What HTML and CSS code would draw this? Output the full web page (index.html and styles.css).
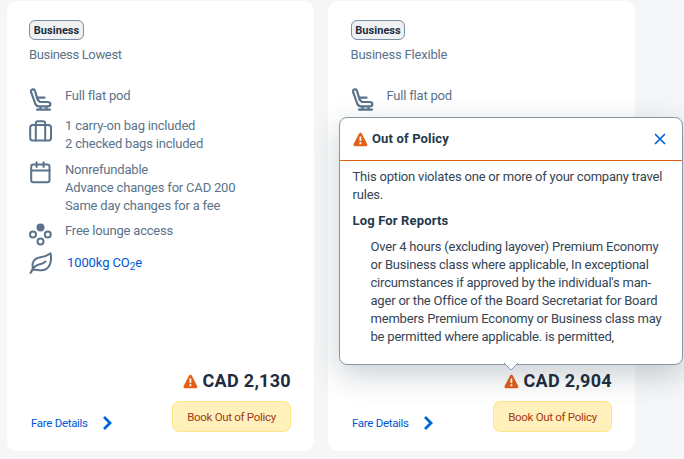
FILE: index.html
```html
<!DOCTYPE html>
<html lang="en">
<head>
    <meta charset="UTF-8">
    <title>Fares</title>
    <link rel="stylesheet" href="styles.css">
</head>
<body>
<svg class="defs" width="0" height="0">
    <symbol id="i-seat" viewBox="0 0 23 23">
        <path d="M2 3.8C1.6 1 5.4 .4 6 2.8L8.6 11.6L11 14H18.5C22.3 14 22.3 18.4 18.5 18.4H10C8 18.4 7.1 17.5 6.4 16Z M9.4 9.6H15.5 M11.5 18.5V21 M17.5 18.5V21 M8 21.6H21"/>
    </symbol>
    <symbol id="i-bag" viewBox="0 0 23 23">
        <rect x="1.2" y="5" width="20.8" height="15.5" rx="2.5"/>
        <path d="M6.8 5V20.5 M16.2 5V20.5 M6.8 5V3.5Q6.8 1.2 9 1.2H14Q16.2 1.2 16.2 3.5V5"/>
    </symbol>
    <symbol id="i-cal" viewBox="0 0 23 23">
        <rect x="2.2" y="3.5" width="18.3" height="17.7" rx="2"/>
        <path d="M2 9.5H20.5 M7.6 1.3V6 M14.6 1.3V6"/>
    </symbol>
    <symbol id="i-lounge" viewBox="0 0 23 23">
        <circle class="solid" cx="11.5" cy="4.5" r="4"/>
        <circle cx="4" cy="11.5" r="3"/>
        <circle cx="18.8" cy="11.5" r="3"/>
        <circle cx="11.5" cy="18.5" r="3"/>
    </symbol>
    <symbol id="i-leaf" viewBox="0 0 23 23">
        <path d="M4 16.5C2.5 11 4.5 6.5 11.5 5.3C16 4.7 18.5 3.5 21.5 1.4C23 8 21.5 17.5 13 18.3C10 18.5 7.5 17.5 4 17.5C2.5 18 3.3 20 1.5 21 M1.5 21C3.5 15.5 6 13.5 10 12.5C12.5 12 14.5 11.3 16.5 9.5"/>
    </symbol>
    <symbol id="i-warn" viewBox="0 0 15 15">
        <path class="tri" d="M7.4 2.2L12.8 12.8H2Z"/>
        <path class="mark" d="M7.4 4.6V9 M7.4 10.3V12.2"/>
    </symbol>
</svg>

<div class="fares">
    <div class="card">
        <span class="tag">Business</span>
        <div class="name">Business Lowest</div>
        <ul class="features">
            <li class="seat"><svg><use href="#i-seat"/></svg><p>Full flat pod</p></li>
            <li class="bags"><svg><use href="#i-bag"/></svg><p>1 carry-on bag included<br>2 checked bags included</p></li>
            <li class="rules"><svg><use href="#i-cal"/></svg><p>Nonrefundable<br>Advance changes for CAD 200<br>Same day changes for a fee</p></li>
            <li class="lounge"><svg><use href="#i-lounge"/></svg><p>Free lounge access</p></li>
            <li class="co2"><svg><use href="#i-leaf"/></svg><a>1000kg CO<sub>2</sub>e</a></li>
        </ul>
        <div class="price"><svg class="warn"><use href="#i-warn"/></svg>CAD 2,130</div>
        <div class="actions">
            <a class="details">Fare Details <svg viewBox="0 0 10 14"><path d="M2 1L8 7L2 13"/></svg></a>
            <button class="book">Book Out of Policy</button>
        </div>
    </div>

    <div class="card flexible">
        <span class="tag">Business</span>
        <div class="name">Business Flexible</div>
        <ul class="features">
            <li class="seat"><svg><use href="#i-seat"/></svg><p>Full flat pod</p></li>
        </ul>
        <div class="price"><svg class="warn"><use href="#i-warn"/></svg>CAD 2,904</div>
        <div class="actions">
            <a class="details">Fare Details <svg viewBox="0 0 10 14"><path d="M2 1L8 7L2 13"/></svg></a>
            <button class="book">Book Out of Policy</button>
        </div>
    </div>
</div>

<div class="popover">
    <div class="popover-head">
        <svg class="warn"><use href="#i-warn"/></svg>
        <h3>Out of Policy</h3>
        <svg class="close" viewBox="0 0 12 12"><path d="M1 1L11 11M11 1L1 11"/></svg>
    </div>
    <div class="popover-body">
        <p class="intro">This option violates one or more of your company travel<br>rules.</p>
        <h4>Log For Reports</h4>
        <p class="log">Over 4 hours (excluding layover) Premium Economy<br>or Business class where applicable, In exceptional<br>circumstances if approved by the individual's man-<br>ager or the Office of the Board Secretariat for Board<br>members Premium Economy or Business class may<br>be permitted where applicable. is permitted,</p>
    </div>
    <svg class="arrow" viewBox="0 0 14 8"><path d="M0 0L7 7L14 0"/></svg>
</div>
</body>
</html>
```

FILE: styles.css
```css
* {
    margin: 0;
    padding: 0;
    box-sizing: border-box;
    list-style: none;
}

body {
    height: 459px;
    overflow: hidden;
    background: #f5f6f7;
    color: #5b738b;
    font: 13px/18px Roboto, "Liberation Sans", sans-serif;
    letter-spacing: -.2px;
    white-space: nowrap;
}

.defs {
    position: absolute;
}

.fares {
    display: flex;
    gap: 14px;
    padding: 1px 0 0 7px;
}

.card {
    display: flex;
    flex-direction: column;
    flex: none;
    width: 307px;
    height: 450px;
    padding: 19px 23px 18px 22px;
    border-radius: 10px;
    background: #fff;
}

.tag {
    align-self: flex-start;
    width: 55px;
    height: 20px;
    border: 1px solid #788fa6;
    border-radius: 6px;
    background: #eff1f2;
    color: #1d2d3e;
    font-size: 11px;
    font-weight: 700;
    line-height: 19px;
    letter-spacing: .05px;
    text-align: center;
}

.name {
    margin-top: 6px;
    letter-spacing: -.35px;
}

.flexible .tag {
    width: 54px;
    margin-left: 1px;
}

.flexible .name {
    padding-left: .5px;
    letter-spacing: -.2px;
}

.flexible .features {
    padding-left: .5px;
}

.features {
    margin-top: 23px;
}

.features li {
    display: flex;
    gap: 13px;
}

.features svg {
    flex: none;
    width: 23px;
    height: 23px;
    fill: none;
    stroke: #5b738b;
    stroke-width: 2;
    stroke-linecap: round;
    stroke-linejoin: round;
}

.features .solid {
    fill: #5b738b;
    stroke: none;
}

.solid {
    fill: #5b738b;
    stroke: none;
}

.seat {
    height: 30px;
}

.features .seat svg {
    margin-top: 1px;
    stroke-width: 2.2;
}

.bags {
    height: 44px;
}

.bags svg {
    margin-top: 3px;
}

.rules {
    height: 61px;
}

.lounge {
    height: 32px;
}

.lounge svg {
    margin-top: 1px;
}

.co2 a {
    margin-left: 2px;
    color: #0057d2;
    letter-spacing: -.1px;
}

.co2 svg {
    margin-top: -2px;
}

.co2 sub {
    font-size: 10px;
    line-height: 0;
    vertical-align: -3px;
}

.price {
    display: flex;
    justify-content: flex-end;
    align-items: center;
    gap: 5px;
    margin-top: auto;
    color: #1d2d3e;
    font-size: 18px;
    font-weight: 700;
    line-height: 22px;
    letter-spacing: .3px;
}

.warn {
    width: 15px;
    height: 15px;
}

.tri {
    fill: #e26018;
    stroke: #e26018;
    stroke-width: 3;
    stroke-linejoin: round;
}

.mark {
    stroke: #fff;
    stroke-width: 1.8;
}

.actions {
    display: flex;
    justify-content: space-between;
    margin-top: 9px;
    padding-left: 2px;
}

.details {
    display: flex;
    align-items: center;
    gap: 14px;
    height: 18px;
    margin-top: 13px;
    color: #0057d2;
    font-size: 11.5px;
    letter-spacing: -.3px;
}

.details svg {
    width: 10px;
    height: 14px;
    fill: none;
    stroke: #0064d9;
    stroke-width: 2.8;
}

.book {
    width: 119px;
    height: 31px;
    margin-bottom: 1px;
    border: 1px solid #ffe68a;
    border-radius: 7px;
    background: #fff0bc;
    color: #a33a14;
    font: 11.5px Roboto, "Liberation Sans", sans-serif;
    letter-spacing: -.3px;
}

.popover {
    position: absolute;
    left: 339px;
    top: 117px;
    width: 344px;
    height: 248px;
    border: 1px solid #8896a5;
    border-radius: 8px;
    background: #fff;
    box-shadow: 0 10px 30px rgba(34, 53, 72, .24);
    color: #354554;
}

.popover-head {
    display: flex;
    align-items: center;
    height: 43px;
    padding: 0 16px 0 13px;
    border-bottom: 1px solid #e26018;
}

.popover h3,
.popover h4 {
    color: #24384c;
    font-size: 13px;
    font-weight: 700;
    letter-spacing: .15px;
}

.popover-head h3 {
    margin-left: 4px;
}

.close {
    width: 12px;
    height: 12px;
    margin-left: auto;
    stroke: #0064d9;
    stroke-width: 1.7;
}

.popover-body {
    padding: 7px 12.5px;
}

.popover h4 {
    margin: 8px 0;
}

.log {
    padding-left: 18px;
}

.arrow {
    position: absolute;
    left: 164px;
    top: 245px;
    width: 14px;
    height: 8px;
    fill: #fff;
    stroke: #8896a5;
}
```
